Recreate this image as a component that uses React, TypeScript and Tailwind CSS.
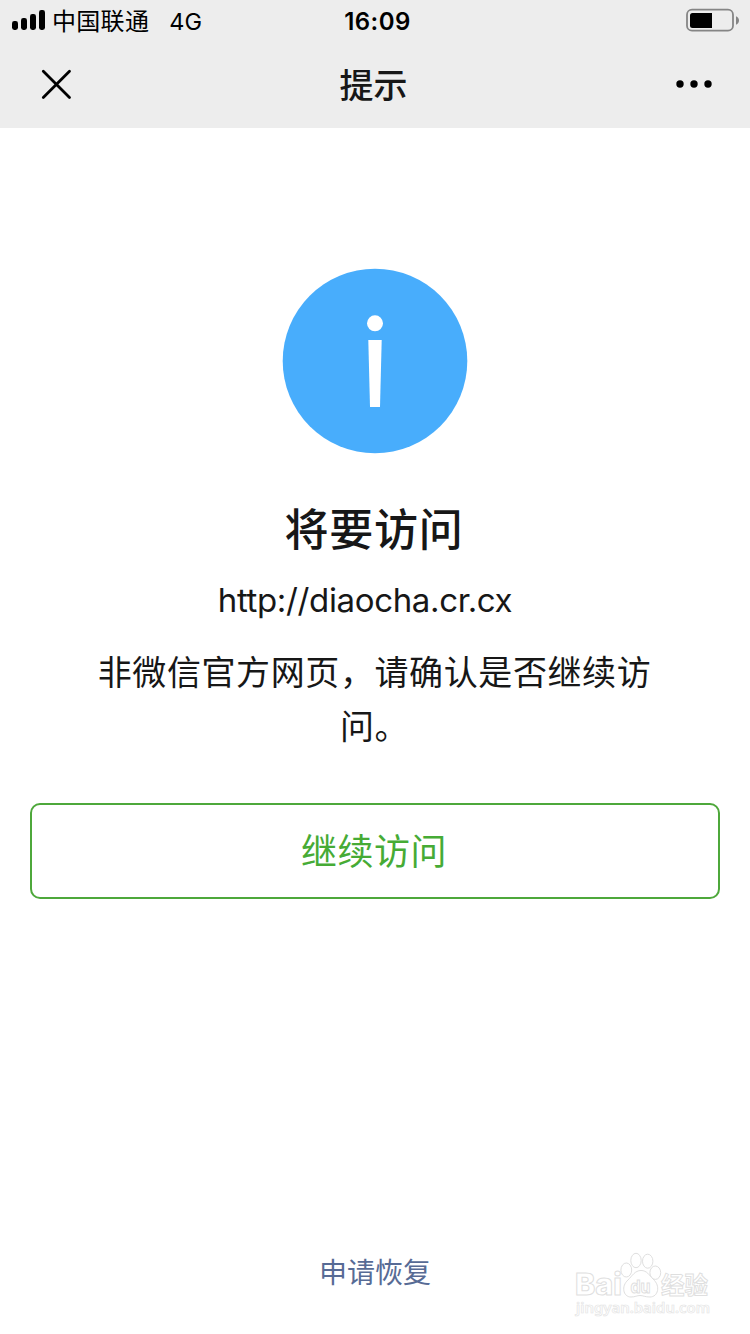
import React from "react";

function SignalIcon() {
  return (
    <svg width="34" height="22" viewBox="0 0 34 22" fill="#000" aria-hidden="true">
      <rect x="0" y="12" width="6" height="9" rx="2.4" />
      <rect x="9" y="9" width="6" height="12" rx="2.4" />
      <rect x="18" y="5" width="6" height="16" rx="2.4" />
      <rect x="27" y="1" width="6" height="20" rx="2.4" />
    </svg>
  );
}

function BatteryIcon() {
  return (
    <svg width="54" height="24" viewBox="0 0 54 24" aria-hidden="true">
      <rect x="1" y="1.7" width="46" height="21" rx="5" fill="none" stroke="#858585" strokeWidth="1.8" />
      <path d="M4 7.500a2.500 2.500 0 0 1 2.500-2.500H26v15H6.500A2.500 2.500 0 0 1 4 17.500z" fill="#000" />
      <path d="M50 8.200c4 1.500 4 7 0 8.500z" fill="#858585" />
    </svg>
  );
}

function StatusBar() {
  return (
    <div className="grid h-[40px] grid-cols-3 items-center pl-3 pr-[10px] text-black">
      <div className="flex items-center">
        <SignalIcon />
        <span className="ml-[6px] whitespace-nowrap pt-[4px] text-[24px] leading-[36px] tracking-[0.3px]">中国联通</span>
        <span className="ml-[20px] pt-[4px] text-[23.500px] leading-[36px]">4G</span>
      </div>
      <span className="pl-[3px] pt-[4px] text-center text-[24px] font-semibold leading-[36px] tracking-[0.4px]">16:09</span>
      <div className="flex justify-end">
        <BatteryIcon />
      </div>
    </div>
  );
}

function NavBar() {
  return (
    <div className="grid h-[88px] grid-cols-3 items-center pl-[41px] pr-[38px]">
      <svg width="31" height="31" viewBox="0 0 31 31" stroke="#000" strokeWidth="2.8" strokeLinecap="round" aria-label="关闭">
        <path d="M2.300 2.300L28.500 28.500M28.500 2.300L2.300 28.500" />
      </svg>
      <h1 className="pr-[6px] pt-[4px] text-center text-[34px] font-medium leading-[84px] text-[#171717]">提示</h1>
      <svg className="justify-self-end" width="36" height="8" viewBox="0 0 36 8" fill="#000" aria-label="更多">
        <circle cx="4" cy="4" r="3.700" />
        <circle cx="18" cy="4" r="3.700" />
        <circle cx="32" cy="4" r="3.700" />
      </svg>
    </div>
  );
}

function InfoIcon() {
  return (
    <svg width="186" height="186" viewBox="0 0 186 186" aria-hidden="true">
      <circle cx="93" cy="93" r="92.300" fill="#48adfc" />
      <circle cx="93" cy="55.300" r="8" fill="#fff" />
      <path d="M86.300 72h13.400l-1.700 67h-10z" fill="#fff" />
    </svg>
  );
}

function Watermark() {
  return (
    <div className="absolute left-[574px] top-[1250px] h-[72px] w-[140px]">
      <svg width="140" height="72" viewBox="0 0 140 72" fill="#fff" stroke="#dfdfdf" strokeWidth="1" aria-hidden="true">
        <text x="1" y="45" fontFamily="Inter, sans-serif" fontWeight="800" fontSize="30" textLength="47" lengthAdjust="spacingAndGlyphs">Bai</text>
        <ellipse cx="52.300" cy="20" rx="5.400" ry="7" />
        <ellipse cx="62" cy="10.500" rx="5.200" ry="7.200" />
        <ellipse cx="73.700" cy="11.200" rx="5.200" ry="7" />
        <ellipse cx="81.300" cy="22.700" rx="5.400" ry="6.700" />
        <path d="M67 20.500C73 20.500 75 25 79 29C87 36 84 47 76 47C71 47 69 45.500 66 45.500C63 45.500 61 47 57 47C49 47 47 36 54 30C58 26 61 20.500 67 20.500Z" />
        <text x="56.500" y="43" fontFamily="Inter, sans-serif" fontWeight="700" fontSize="17" textLength="20" lengthAdjust="spacingAndGlyphs">du</text>
        <text x="87" y="43.500" fontFamily="'Noto Sans CJK SC', sans-serif" fontWeight="700" fontSize="24" textLength="47" lengthAdjust="spacingAndGlyphs">经验</text>
        <text x="2" y="63" fontFamily="'Noto Sans', sans-serif" fontWeight="600" fontSize="15" stroke="#e4e4e4" strokeWidth="0.7" textLength="134" lengthAdjust="spacingAndGlyphs">jingyan.baidu.com</text>
      </svg>
    </div>
  );
}

export default function App() {
  return (
    <div className="relative flex h-[1334px] w-[750px] flex-col overflow-hidden bg-white font-[Inter,'Noto_Sans_CJK_SC',sans-serif] text-[#171717]">
      <header className="h-[128px] bg-[#ededed]">
        <StatusBar />
        <NavBar />
      </header>
      <main className="flex flex-1 flex-col items-center px-[30px] pt-[140px]">
        <InfoIcon />
        <h2 className="mt-[46px] pr-[2px] text-[44px] font-medium leading-[60px] tracking-[0.8px]">将要访问</h2>
        <p className="mt-[16px] pr-5 text-[33px] leading-[48px] tracking-[-0.35px]">http://diaocha.cr.cx</p>
        <p className="mt-[22px] w-[560px] pr-[1px] text-center text-[34px] leading-[54px] tracking-[0.6px]">
          非微信官方网页，请确认是否继续访问。
        </p>
        <button className="mt-[49px] h-[96px] w-full rounded-[10px] border-2 border-[#4ea83b] pr-[2px] pt-[2px] text-[36px] leading-[90px] tracking-[0.5px] text-[#46ab35]">
          继续访问
        </button>
        <a className="mt-auto mb-[41px] text-[28px] leading-[40px] text-[#576b95]">申请恢复</a>
      </main>
      <Watermark />
    </div>
  );
}
